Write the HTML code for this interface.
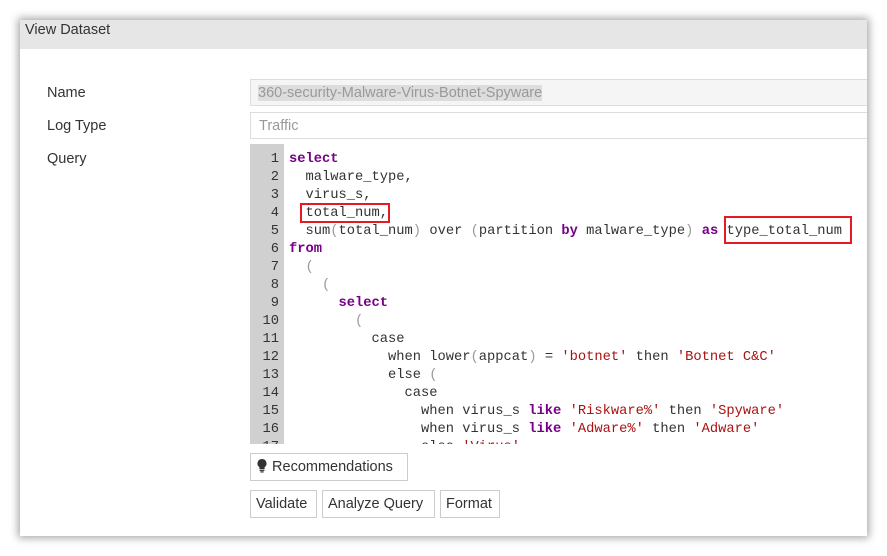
<!DOCTYPE html>
<html><head><style>
body{margin:0;width:887px;height:556px;background:#fff;position:relative;overflow:hidden;font-family:"Liberation Sans",sans-serif;}
.dlg{position:absolute;left:20px;top:20px;width:847px;height:516px;background:#fff;box-shadow:0 0 8px 2px rgba(0,0,0,.35);overflow:hidden}
.hdr{position:absolute;left:0;top:0;width:100%;height:29px;background:#e6e6e6;font-size:14.5px;color:#333;line-height:21px;padding-left:5px}
.lbl{position:absolute;left:27px;font-size:14.5px;color:#333}
.inp{position:absolute;left:230px;width:640px;height:27px;border:1px solid #ddd;font-size:14.5px;color:#999;box-sizing:border-box}
.code{position:absolute;left:230px;top:124px;width:640px;height:300px;overflow:hidden;font-family:"Liberation Mono",monospace;font-size:13.75px;color:#333}
.gut{position:absolute;left:0;top:0;width:34px;height:300px;background:#d0d0d0}
.ln{position:absolute;height:18px;line-height:18px;white-space:pre}
.n{width:29px;text-align:right;left:0}
.t{left:39px}
.k{color:#708;font-weight:bold}.s{color:#a11}.p{color:#999}
.btn{position:absolute;height:28px;border:1px solid #ccc;box-sizing:border-box;font-size:14.5px;color:#333;line-height:27px;padding:0 5px;background:#fff}
.red{position:absolute;border:2px solid #e31b23;box-sizing:border-box}
</style></head><body>
<div class="dlg">
<div class="hdr">View Dataset</div>
<div class="lbl" style="top:65px">Name</div>
<div class="lbl" style="top:98px">Log Type</div>
<div class="lbl" style="top:131px">Query</div>
<div class="inp" style="top:59px;background:#f5f5f5;padding:5px 0 0 7px"><span style="background:#ddd;color:#999">360-security-Malware-Virus-Botnet-Spyware</span></div>
<div class="inp" style="top:92px;padding:5px 0 0 8px">Traffic</div>
<div class="code"><div class="gut"></div>
<div class="ln n" style="top:7px">1</div><div class="ln t" style="top:7px"><span class="k">select</span></div>
<div class="ln n" style="top:25px">2</div><div class="ln t" style="top:25px">  malware_type,</div>
<div class="ln n" style="top:43px">3</div><div class="ln t" style="top:43px">  virus_s,</div>
<div class="ln n" style="top:61px">4</div><div class="ln t" style="top:61px">  total_num,</div>
<div class="ln n" style="top:79px">5</div><div class="ln t" style="top:79px">  sum<span class="p">(</span>total_num<span class="p">)</span> over <span class="p">(</span>partition <span class="k">by</span> malware_type<span class="p">)</span> <span class="k">as</span> type_total_num</div>
<div class="ln n" style="top:97px">6</div><div class="ln t" style="top:97px"><span class="k">from</span></div>
<div class="ln n" style="top:115px">7</div><div class="ln t" style="top:115px">  <span class="p">(</span></div>
<div class="ln n" style="top:133px">8</div><div class="ln t" style="top:133px">    <span class="p">(</span></div>
<div class="ln n" style="top:151px">9</div><div class="ln t" style="top:151px">      <span class="k">select</span></div>
<div class="ln n" style="top:169px">10</div><div class="ln t" style="top:169px">        <span class="p">(</span></div>
<div class="ln n" style="top:187px">11</div><div class="ln t" style="top:187px">          case</div>
<div class="ln n" style="top:205px">12</div><div class="ln t" style="top:205px">            when lower<span class="p">(</span>appcat<span class="p">)</span> = <span class="s">'botnet'</span> then <span class="s">'Botnet C&amp;C'</span></div>
<div class="ln n" style="top:223px">13</div><div class="ln t" style="top:223px">            else <span class="p">(</span></div>
<div class="ln n" style="top:241px">14</div><div class="ln t" style="top:241px">              case</div>
<div class="ln n" style="top:259px">15</div><div class="ln t" style="top:259px">                when virus_s <span class="k">like</span> <span class="s">'Riskware%'</span> then <span class="s">'Spyware'</span></div>
<div class="ln n" style="top:277px">16</div><div class="ln t" style="top:277px">                when virus_s <span class="k">like</span> <span class="s">'Adware%'</span> then <span class="s">'Adware'</span></div>
<div class="ln n" style="top:295px">17</div><div class="ln t" style="top:295px">                else <span class="s">'Virus'</span></div>
</div>
<div class="red" style="left:280px;top:183px;width:90px;height:20px"></div>
<div class="red" style="left:704px;top:196px;width:128px;height:28px"></div>
<div class="btn" style="left:230px;top:433px;width:158px"><svg width="12" height="15" viewBox="0 0 12 15" style="vertical-align:-2px"><path d="M6 1a4.5 4.5 0 0 0-2.6 8.2V11h5.2V9.2A4.5 4.5 0 0 0 6 1z" fill="#333"/><rect x="3.6" y="11.6" width="4.8" height="1.3" fill="#333"/><rect x="4.3" y="13.3" width="3.4" height="1.2" fill="#333"/></svg> Recommendations</div>
<div class="btn" style="left:230px;top:470px;width:67px">Validate</div>
<div class="btn" style="left:302px;top:470px;width:113px">Analyze Query</div>
<div class="btn" style="left:420px;top:470px;width:60px">Format</div>
</div>
</body></html>
